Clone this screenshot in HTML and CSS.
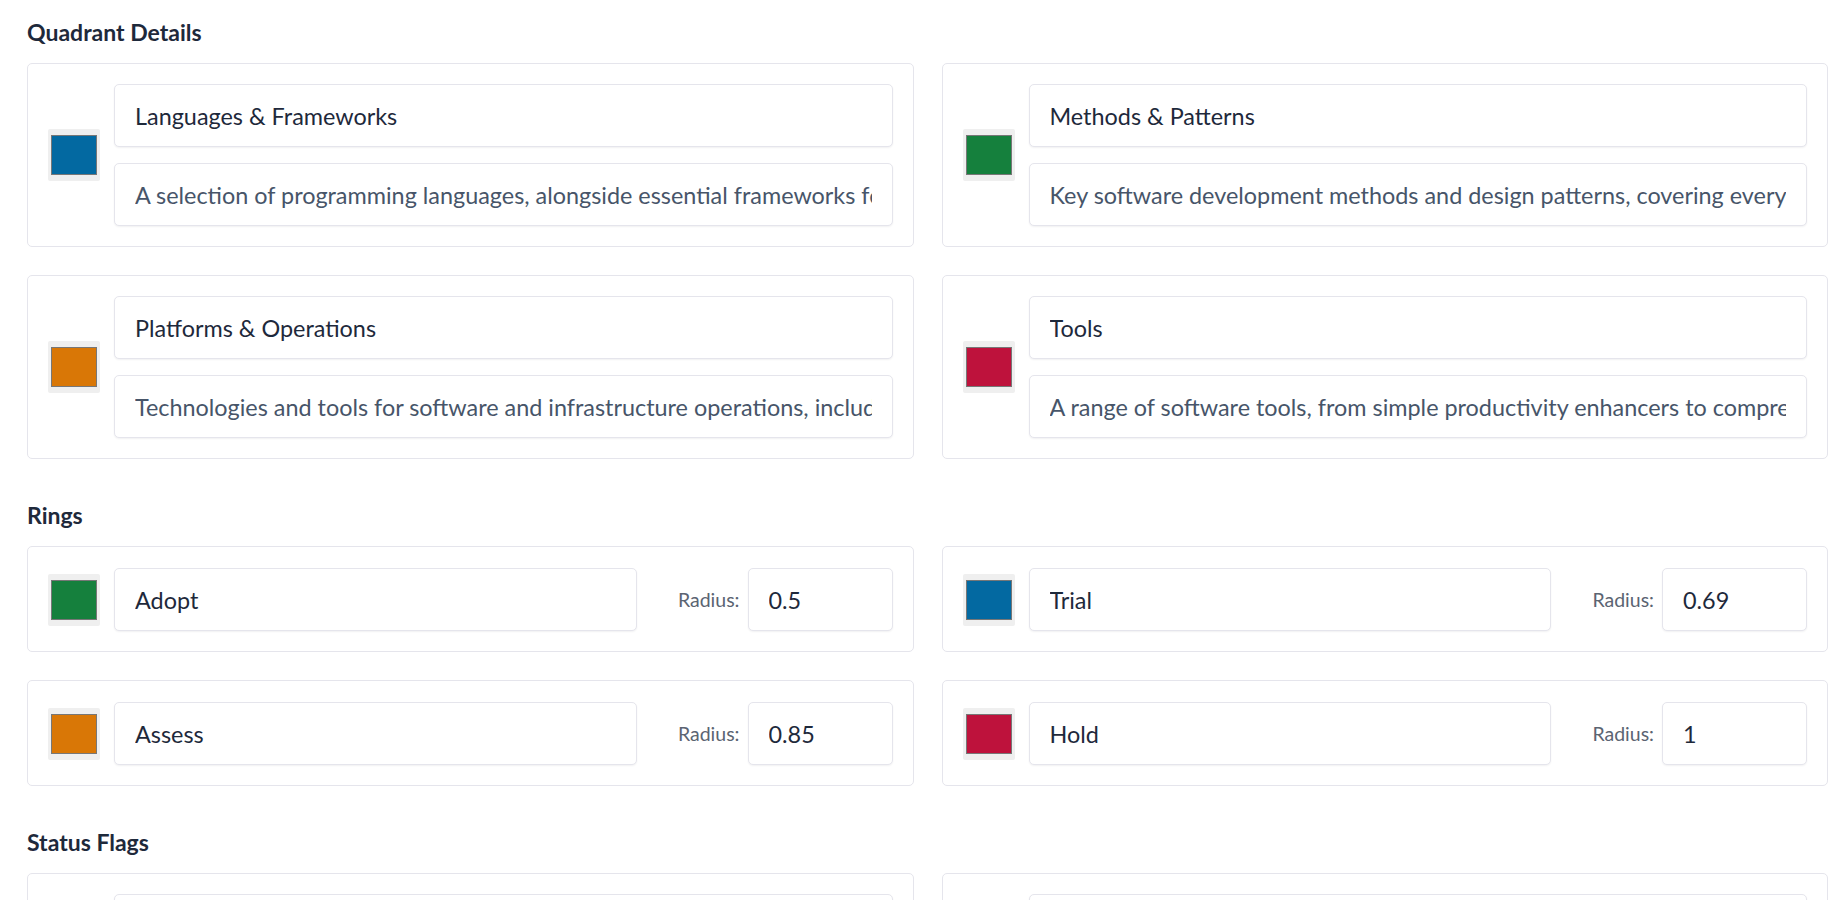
FILE: index.html
```html
<!DOCTYPE html>
<html lang="en">
<head>
<meta charset="utf-8">
<title>Radar Settings</title>
<link rel="stylesheet" href="styles.css">
</head>
<body>
<main class="page">
  <section class="section">
    <h2 class="section-title">Quadrant Details</h2>
    <div class="grid">
      <div class="card">
        <div class="swatch"><span class="swatch-color c-blue"></span></div>
        <div class="fields">
          <input class="field name" type="text" value="Languages &amp; Frameworks">
          <input class="field desc" type="text" value="A selection of programming languages, alongside essential frameworks for building a variety of software, from web apps to data pipelines.">
        </div>
      </div>
      <div class="card">
        <div class="swatch"><span class="swatch-color c-green"></span></div>
        <div class="fields">
          <input class="field name" type="text" value="Methods &amp; Patterns">
          <input class="field desc" type="text" value="Key software development methods and design patterns, covering everything from team practices to architecture.">
        </div>
      </div>
      <div class="card">
        <div class="swatch"><span class="swatch-color c-orange"></span></div>
        <div class="fields">
          <input class="field name" type="text" value="Platforms &amp; Operations">
          <input class="field desc" type="text" value="Technologies and tools for software and infrastructure operations, including cloud platforms, containers and monitoring.">
        </div>
      </div>
      <div class="card">
        <div class="swatch"><span class="swatch-color c-red"></span></div>
        <div class="fields">
          <input class="field name" type="text" value="Tools">
          <input class="field desc" type="text" value="A range of software tools, from simple productivity enhancers to comprehensive project solutions.">
        </div>
      </div>
    </div>
  </section>

  <section class="section">
    <h2 class="section-title">Rings</h2>
    <div class="grid">
      <div class="card ring">
        <div class="swatch"><span class="swatch-color c-green"></span></div>
        <input class="field name ring-name" type="text" value="Adopt">
        <label class="radius-label">Radius:</label>
        <input class="field radius" type="text" value="0.5">
      </div>
      <div class="card ring">
        <div class="swatch"><span class="swatch-color c-blue"></span></div>
        <input class="field name ring-name" type="text" value="Trial">
        <label class="radius-label">Radius:</label>
        <input class="field radius" type="text" value="0.69">
      </div>
      <div class="card ring">
        <div class="swatch"><span class="swatch-color c-orange"></span></div>
        <input class="field name ring-name" type="text" value="Assess">
        <label class="radius-label">Radius:</label>
        <input class="field radius" type="text" value="0.85">
      </div>
      <div class="card ring">
        <div class="swatch"><span class="swatch-color c-red"></span></div>
        <input class="field name ring-name" type="text" value="Hold">
        <label class="radius-label">Radius:</label>
        <input class="field radius" type="text" value="1">
      </div>
    </div>
  </section>

  <section class="section">
    <h2 class="section-title">Status Flags</h2>
    <div class="grid">
      <div class="card">
        <div class="swatch"><span class="swatch-color c-gray"></span></div>
        <div class="fields">
          <input class="field name" type="text" value="New">
          <input class="field desc" type="text" value="Recently added to the radar.">
        </div>
      </div>
      <div class="card">
        <div class="swatch"><span class="swatch-color c-gray"></span></div>
        <div class="fields">
          <input class="field name" type="text" value="Moved">
          <input class="field desc" type="text" value="Moved to a different ring since the last edition.">
        </div>
      </div>
    </div>
  </section>
</main>
</body>
</html>
```

FILE: styles.css
```css
html, body {
  margin: 0;
  padding: 0;
  background: #ffffff;
  overflow: hidden;
}

body {
  font-family: Lato, "Open Sans", "Liberation Sans", sans-serif;
  color: #1f2937;
}

.page {
  padding: 18px 12px 0 27px;
}

.section + .section {
  margin-top: 42px;
}

.section-title {
  margin: 0 0 17px 0;
  font-size: 23px;
  line-height: 28px;
  font-weight: 700;
  color: #1e293b;
}

.grid {
  display: grid;
  grid-template-columns: 1fr 1fr;
  column-gap: 28px;
  row-gap: 28px;
}

.card {
  display: flex;
  align-items: center;
  gap: 14px;
  padding: 20px;
  border: 1px solid #e5e5ec;
  border-radius: 5px;
  background: #ffffff;
}

.card.ring {
  padding-top: 21px;
  padding-bottom: 20px;
}

.swatch {
  flex: 0 0 auto;
  width: 52px;
  height: 52px;
  box-sizing: border-box;
  padding: 6px 3px;
  background: #efefef;
  border-radius: 2px;
}

.swatch-color {
  display: block;
  width: 100%;
  height: 100%;
  box-sizing: border-box;
  border: 1px solid #777777;
}

.c-blue { background: #0369a1; }
.c-green { background: #15803d; }
.c-orange { background: #d97706; }
.c-red { background: #be123c; }
.c-gray { background: #6b7280; }

.fields {
  flex: 1 1 auto;
  min-width: 0;
  display: flex;
  flex-direction: column;
  gap: 16px;
}

.field {
  display: block;
  box-sizing: border-box;
  height: 63px;
  margin: 0;
  padding: 0 20px;
  border: 1px solid #e5e5ec;
  border-radius: 5px;
  background: #ffffff;
  box-shadow: 0 1px 2px rgba(17, 24, 39, 0.06);
  font-family: inherit;
  font-size: 23.4px;
  color: #1e293b;
  outline: none;
}

.field.desc {
  color: #475569;
}

.ring-name {
  flex: 1 1 auto;
  min-width: 0;
  width: auto;
}

.radius-label {
  flex: 0 0 auto;
  margin-left: 27px;
  margin-right: -6px;
  font-size: 19.5px;
  color: #5b6472;
}

.field.radius {
  flex: 0 0 145px;
  width: 145px;
}
```
